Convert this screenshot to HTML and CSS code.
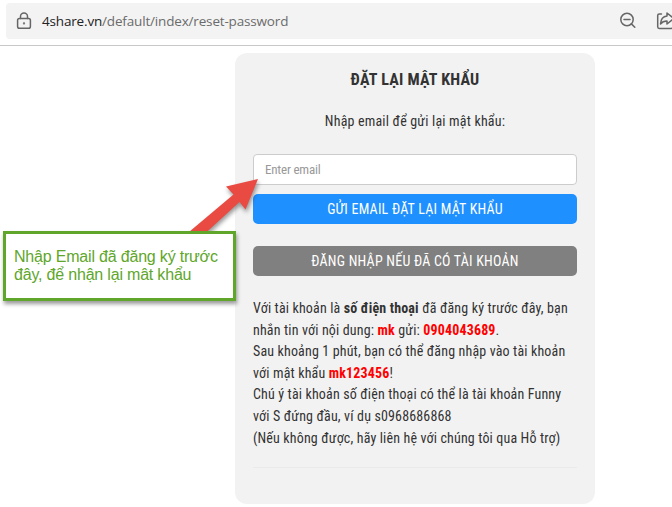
FILE: index.html
```html
<!DOCTYPE html>
<html lang="vi">
<head>
<meta charset="utf-8">
<title>Đặt lại mật khẩu</title>
<link rel="stylesheet" href="styles.css">
</head>
<body>
<header class="browser-bar">
  <div class="address">
    <svg class="lock" width="16" height="18" viewBox="0 0 16 18"><rect x="1.6" y="6.500" width="12.800" height="9.700" rx="1.8"/><path d="M4.500 6.500V4.600a3.500 3.500 0 0 1 7 0v1.900"/><circle cx="8" cy="11.400" r=".4"/></svg>
    <span class="url"><b>4share.vn</b>/default/index/reset-password</span>
    <svg class="zoom-out" width="18" height="18" viewBox="0 0 18 18"><circle cx="8" cy="7.5" r="6.200"/><path d="M5 7.5h6M12.400 11.900l3.400 3.400"/></svg>
    <svg class="share" width="18" height="20" viewBox="0 0 18 20"><path d="M5.500 3H3.300a1.600 1.600 0 0 0-1.600 1.600v11.200a1.600 1.600 0 0 0 1.600 1.600h12a1.600 1.600 0 0 0 1.600-1.600v-2"/><path d="M11 2l7 5.500-7 5.500V10C8 10 6 11 4.500 13c.3-4.800 2.800-7.600 6.500-8z"/></svg>
  </div>
</header>
<main class="card">
  <h1>ĐẶT LẠI MẬT KHẨU</h1>
  <p class="intro">Nhập email để gửi lại mật khẩu:</p>
  <input class="email" type="email" placeholder="Enter email">
  <button class="btn primary">GỬI EMAIL ĐẶT LẠI MẬT KHẨU</button>
  <button class="btn secondary">ĐĂNG NHẬP NẾU ĐÃ CÓ TÀI KHOẢN</button>
  <div class="info">
    <p>Với tài khoản là <b>số điện thoại</b> đã đăng ký trước đây, bạn</p>
    <p>nhắn tin với nội dung: <b class="red">mk</b> gửi: <b class="red">0904043689</b>.</p>
    <p>Sau khoảng 1 phút, bạn có thể đăng nhập vào tài khoản</p>
    <p>với mật khẩu <b class="red">mk123456</b>!</p>
    <p>Chú ý tài khoản số điện thoại có thể là tài khoản Funny</p>
    <p>với S đứng đầu, ví dụ s0968686868</p>
    <p>(Nếu không được, hãy liên hệ với chúng tôi qua Hỗ trợ)</p>
  </div>
  <hr>
</main>
<svg class="arrow" width="90" height="70" viewBox="0 0 90 70"><path d="M78 9L46 16.500L53.500 24.500L9 62V69H19L59.500 32L65.500 39.500Z"/></svg>
<aside class="note">Nhập Email đã đăng ký trước<br>đây, để nhận lại mât khẩu</aside>
</body>
</html>
```
FILE: styles.css
```css
* { box-sizing: border-box; }
body {
  margin: 0;
  height: 507px;
  overflow: hidden;
  background: #fff;
  color: #333;
  font-family: "Roboto Condensed", Roboto, sans-serif;
  font-stretch: 75%;
}
.browser-bar { height: 46px; padding: 3px 0 0 6px; border-bottom: 1px solid #c9c9c9; }
.address {
  display: flex;
  align-items: center;
  height: 36px;
  padding-left: 10px;
  background: #f3f3f3;
  border-radius: 4px 0 0 4px;
}
.address svg { flex: none; fill: none; stroke: #666; stroke-width: 1.5; stroke-linejoin: round; stroke-linecap: round; }
.url { margin-left: 10px; flex: 1; font: 13.5px "Open Sans", sans-serif; letter-spacing: -.17px; color: #6b6b6b; white-space: nowrap; }
.url b { color: #222; font-weight: 400; }
.share { margin: 0 -2px 0 19px; }
.card {
  width: 360px;
  height: 451px;
  margin: 7px 0 0 235px;
  padding: 16px 18px;
  background: #f2f2f2;
  border-radius: 12px;
}
h1, p { margin: 0; }
h1 { font-size: 16px; line-height: 22px; text-align: center; letter-spacing: .23px; }
.intro { margin-top: 20px; font-size: 14px; line-height: 20px; letter-spacing: .18px; text-align: center; }
.email {
  display: block;
  width: 100%;
  height: 31px;
  margin-top: 23px;
  padding: 0 11px;
  border: 1px solid #ccc;
  border-radius: 4px;
  background: #fff;
  font: inherit;
  font-size: 13px;
  font-stretch: 75%;
  letter-spacing: -.2px;
}
.email::placeholder { color: #999; }
.btn {
  display: block;
  width: 100%;
  height: 30px;
  padding: 0;
  border: 0;
  border-radius: 5px;
  color: #fff;
  font: inherit;
  font-stretch: 75%;
  font-size: 14px;
  letter-spacing: .22px;
}
.primary { margin-top: 9px; background: #1e90ff; }
.secondary { margin-top: 22px; background: #808080; }
.info { margin-top: 22px; font-size: 14px; line-height: 21.6px; letter-spacing: .15px; white-space: nowrap; }
.red { color: #f00; }
hr { margin: 18px 0 0; border: 0; border-top: 1px solid #eaeaea; }
.arrow { position: absolute; left: 180px; top: 170px; fill: #e94b43; filter: drop-shadow(1px 3px 2px #0006); }
.note {
  position: absolute;
  left: 3px;
  top: 231px;
  width: 233px;
  height: 70px;
  padding: 14px 8px;
  border: 3px solid #60a62b;
  background: #fff;
  box-shadow: 1px 3px 4px #0006;
  color: #60a62b;
  font: 16px/18px "Liberation Sans", sans-serif;
  letter-spacing: -.19px;
  white-space: nowrap;
}
.note::first-line { letter-spacing: -.19px; }
```
